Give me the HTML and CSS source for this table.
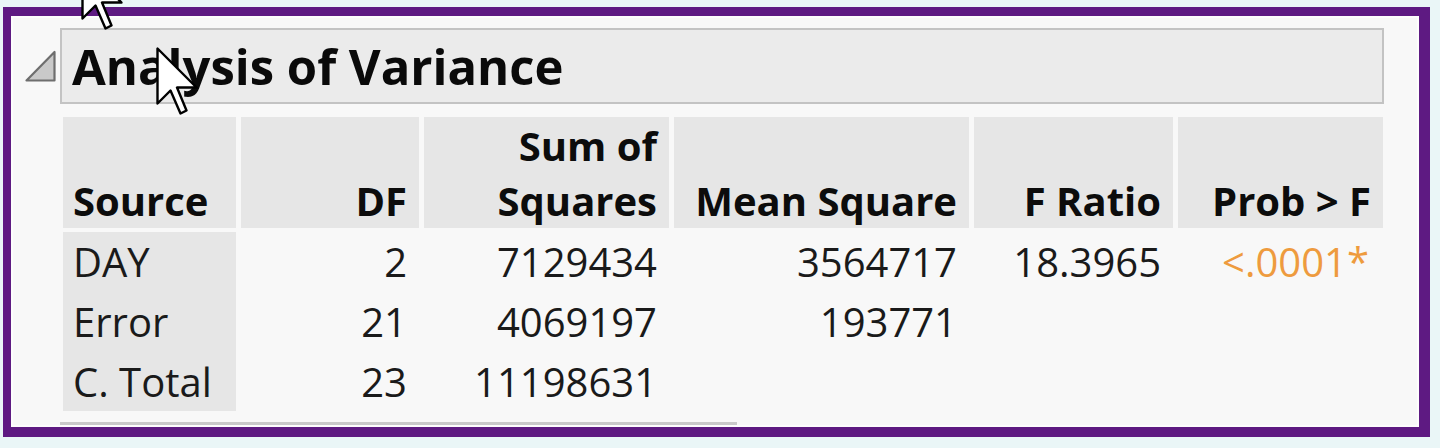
FILE: index.html
```html
<!DOCTYPE html>
<html lang="en">
<head>
<meta charset="utf-8">
<title>Analysis of Variance</title>
<link rel="stylesheet" href="styles.css">
</head>
<body>
<div class="frame">
  <div class="report">
    <div class="outline">
      <svg class="disclosure" width="31" height="32" viewBox="0 0 31 32" aria-hidden="true">
        <polygon points="1.5,30.5 29.5,2 29.5,30.5" fill="#c9c9c9" stroke="#6e6e6e" stroke-width="2.2" stroke-linejoin="round"/>
      </svg>
      <div class="title-bar"><span class="title">Analysis of Variance</span></div>
    </div>
    <div class="anova">
      <div class="hcell left">Source</div>
      <div class="hcell">DF</div>
      <div class="hcell">Sum of<br>Squares</div>
      <div class="hcell">Mean Square</div>
      <div class="hcell">F Ratio</div>
      <div class="hcell">Prob &gt; F</div>

      <div class="cell src">DAY</div>
      <div class="cell">2</div>
      <div class="cell">7129434</div>
      <div class="cell">3564717</div>
      <div class="cell">18.3965</div>
      <div class="cell sig">&lt;.0001*</div>

      <div class="cell src">Error</div>
      <div class="cell">21</div>
      <div class="cell">4069197</div>
      <div class="cell">193771</div>
      <div class="cell"></div>
      <div class="cell"></div>

      <div class="cell src">C. Total</div>
      <div class="cell">23</div>
      <div class="cell">11198631</div>
      <div class="cell"></div>
      <div class="cell"></div>
      <div class="cell"></div>
    </div>
    <div class="hscroll"></div>
  </div>
</div>

<svg class="cursor cursor-main" width="42" height="68" viewBox="-1.5 -1.5 42 68" aria-hidden="true">
  <polygon points="0,0 0,55 13,42 23,65 29,62 19.5,39 39,39" fill="#ffffff" stroke="#000000" stroke-width="2.4" stroke-linejoin="round"/>
</svg>
<svg class="cursor cursor-top" width="42" height="68" viewBox="-1.5 -1.5 42 68" aria-hidden="true">
  <polygon points="0,0 0,55 13,42 23,65 29,62 19.5,39 39,39" fill="#ffffff" stroke="#000000" stroke-width="2.4" stroke-linejoin="round"/>
</svg>
</body>
</html>
```

FILE: styles.css
```css
html, body {
  margin: 0;
  padding: 0;
}

body {
  width: 1440px;
  height: 448px;
  overflow: hidden;
  position: relative;
  background: #eaf6f7;
  font-family: "Open Sans", "Noto Sans", "Liberation Sans", sans-serif;
  color: #141414;
}

.frame {
  margin: 7px 0 0 3px;
  width: 1408px;
  height: 411px;
  border-style: solid;
  border-color: #5e1a82;
  border-width: 9px 11px 10px 8px;
  background: #f8f8f8;
  box-shadow: inset 0 0 0 2px #fdfdfd;
}

.report {
  padding: 12px 35px 0 14px;
  display: flex;
  flex-direction: column;
}

.outline {
  display: flex;
  align-items: center;
  gap: 4px;
}

.disclosure {
  flex: none;
  display: block;
}

.title-bar {
  flex: 1;
  height: 72px;
  border: 2px solid #c3c3c3;
  background: #ebebeb;
  padding-left: 10px;
  display: flex;
  align-items: center;
}

.title {
  font-size: 49px;
  font-weight: 700;
  line-height: 72px;
  color: #0a0a0a;
}

.anova {
  margin: 13px 0 0 38px;
  display: grid;
  grid-template-columns: 173px 178px 245px 295px 199px 205px;
  grid-template-rows: 115px 60px 60px 59px;
  column-gap: 5px;
}

.hcell {
  background: #e6e6e6;
  margin-bottom: 4px;
  font-size: 40px;
  font-weight: 700;
  line-height: 55px;
  padding: 0 12px 0 10px;
  display: flex;
  align-items: flex-end;
  justify-content: flex-end;
  text-align: right;
  color: #0c0c0c;
}

.hcell.left {
  justify-content: flex-start;
  text-align: left;
}

.cell {
  font-size: 40px;
  line-height: 60px;
  padding: 0 12px 0 10px;
  text-align: right;
  white-space: nowrap;
  color: #1a1a1a;
}

.cell.src {
  background: #e6e6e6;
  text-align: left;
}

.cell.sig {
  color: #ee9b3e;
  padding-right: 14px;
}

.hscroll {
  margin: 11px 0 0 35px;
  width: 677px;
  height: 3px;
  background: #c9c9c9;
}

.cursor {
  position: absolute;
  display: block;
}

.cursor-main {
  left: 156px;
  top: 47px;
}

.cursor-top {
  left: 81px;
  top: -38px;
}
```
